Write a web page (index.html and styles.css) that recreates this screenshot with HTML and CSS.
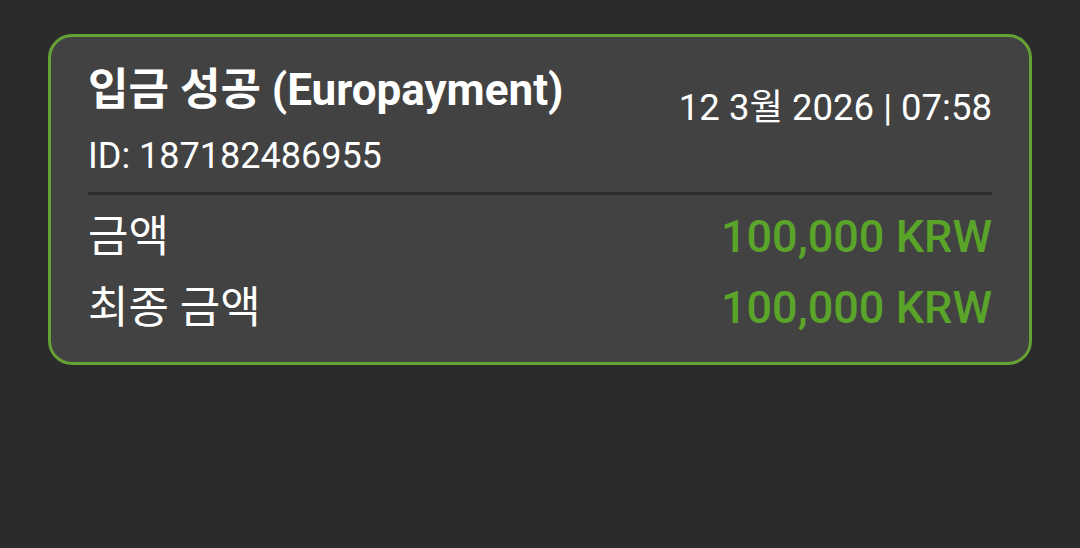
FILE: index.html
```html
<!DOCTYPE html>
<html lang="ko">
<head>
<meta charset="utf-8">
<link rel="stylesheet" href="styles.css">
</head>
<body>
<div class="page">
  <div class="card">
    <div class="head">
      <div class="head-left">
        <div class="title">입금 성공 (Europayment)</div>
        <div class="id">ID: 187182486955</div>
      </div>
      <div class="date">12 3월 2026 | 07:58</div>
    </div>
    <div class="divider"></div>
    <div class="row">
      <span class="label">금액</span>
      <span class="amount">100,000 KRW</span>
    </div>
    <div class="row">
      <span class="label">최종 금액</span>
      <span class="amount">100,000 KRW</span>
    </div>
  </div>
</div>
</body>
</html>
```

FILE: styles.css
```css
html, body {
  margin: 0;
  padding: 0;
  background: #2b2b2b;
  width: 1080px;
  height: 548px;
  overflow: hidden;
  font-family: Roboto, "Noto Sans CJK KR", sans-serif;
  color: #ffffff;
}
.page {
  padding: 34px 48px 0 48px;
}
.card {
  background: #424242;
  border: 3px solid #67a036;
  border-radius: 24px;
  height: 331px;
  box-sizing: border-box;
  padding: 27px 37px 0 37px;
}
.head {
  display: flex;
  justify-content: space-between;
  align-items: flex-start;
}
.title {
  font-size: 44px;
  font-weight: 700;
  line-height: 52px;
}
.id {
  font-size: 36px;
  line-height: 44px;
  margin-top: 18px;
}
.date {
  font-size: 36.5px;
  line-height: 44px;
  margin-top: 22px;
}
.divider {
  height: 3px;
  background: #2d2d2d;
  margin-top: 14px;
  margin-bottom: 6px;
}
.row {
  display: flex;
  justify-content: space-between;
  align-items: baseline;
  height: 71px;
}
.label {
  font-size: 44px;
  line-height: 71px;
}
.amount {
  font-size: 45px;
  font-weight: 500;
  color: #5aa42a;
  line-height: 71px;
}
```
